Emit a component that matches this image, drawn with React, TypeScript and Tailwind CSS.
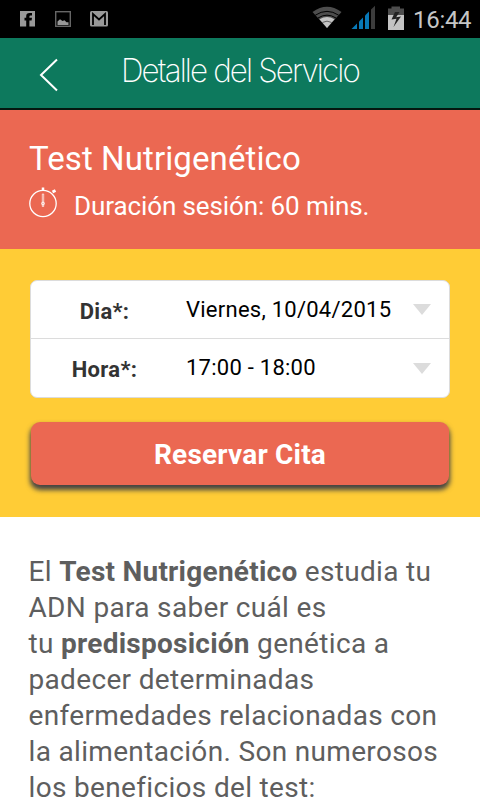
import React from "react";

type SelectRowProps = {
  label: string;
  value: string;
  className?: string;
};

function StatusBar() {
  return (
    <div className="flex h-[38px] items-center bg-black">
      <svg width="110" height="38" viewBox="0 0 110 38" className="shrink-0">
        {/* facebook */}
        <rect x="20" y="11" width="15" height="15.5" fill="#999" />
        <path d="M26.2 27V20.500H24.500V17.800H26.200V16.200Q26.200 13 29.500 13H32V15.600H30.500Q29.400 15.600 29.400 16.700V17.800H32L31.600 20.500H29.400V27Z" fill="#000" />
        {/* gallery */}
        <rect x="55.700" y="11.700" width="14.600" height="14.600" fill="none" stroke="#666" strokeWidth="1.400" />
        <path d="M57.500 25V21.500L60 19.300L62.500 21L64.500 20.300L66.500 22.300H68.500V25Z" fill="#999" />
        {/* gmail */}
        <rect x="90" y="11" width="18" height="15.500" rx="1.500" fill="#999" />
        <path d="M93 25V14L99 19.500L105 14V25" fill="none" stroke="#000" strokeWidth="1.800" />
      </svg>
      <svg width="92" height="38" viewBox="312 0 92 38" className="ml-[202px] shrink-0">
        {/* wifi */}
        <path d="M312.500 12Q327 1.500 341.500 12L327 28Z" fill="#4d4d4d" />
        <path d="M319.500 19.300Q327 14.500 334.500 19.300L327 28Z" fill="#c4c4c4" />
        <path d="M315.300 15.200Q327 7.500 338.700 15.200M318 18Q327 12.300 336 18" fill="none" stroke="#000" strokeWidth="1" />
        <path d="M322.300 22.500Q327 19.800 331.700 22.500" fill="none" stroke="#444" strokeWidth="0.800" />
        {/* signal */}
        <path d="M351.500 29L357 23.500V29Z" fill="#0879b8" />
        <path d="M359 29V21.500L363 17.500V29Z" fill="#0879b8" />
        <path d="M365 29V15.500L369 11.500V29Z" fill="#0879b8" />
        <path d="M371 29V9.500L375 5.800V29Z" fill="#3c3c3c" />
        {/* battery */}
        <path d="M388 8.500H391.500V6.500H400V8.500H404V16H388Z" fill="#4d4d4d" />
        <rect x="388" y="15" width="16" height="15" fill="#c4c4c4" />
        <path d="M395 12L391.500 19.500L396.500 18.700L393.500 27L401 16.500L396.200 17.300L399.500 12Z" fill="#222" />
      </svg>
      <span className="ml-[9px] pt-[2px] text-[24px] leading-[36px] tracking-[-0.3px] text-[#c6c6c6]">16:44</span>
    </div>
  );
}

function SelectRow({ label, value, className = "" }: SelectRowProps) {
  return (
    <div className={`flex items-center ${className}`}>
      <span className="w-[147px] pt-1 text-center text-[22px] leading-[26px] font-bold tracking-[0.3px] text-[#333]">{label}</span>
      <span className="ml-[8px] flex-1 whitespace-nowrap text-[22px] leading-[26px] tracking-[0.25px] text-black">{value}</span>
      <svg width="18" height="11" viewBox="0 0 18 11" className="mr-[18px]">
        <path d="M0 0H18L9 11Z" fill="#dcdcdc" />
      </svg>
    </div>
  );
}

export default function App() {
  return (
    <div className="h-[800px] w-[480px] overflow-hidden bg-white font-['Roboto',sans-serif]">
      <StatusBar />

      <header className="flex h-[72px] border-b-2 border-[#04170f] bg-[#0d795d]">
        <svg width="20" height="34" viewBox="0 0 20 34" className="mt-5 ml-[39px] shrink-0">
          <path d="M18 1.500L2 17L18 32.500" fill="none" stroke="#fff" strokeWidth="2" />
        </svg>
        <h1 className="mt-[11px] ml-[62px] origin-left scale-x-[0.95] whitespace-nowrap font-['Inter',sans-serif] text-[33px] leading-[42px] font-extralight tracking-[-1.95px] text-white">
          Detalle del Servicio
        </h1>
      </header>

      <section className="h-[139px] bg-[#eb6852] pt-[29px] pl-[29px] text-white">
        <h2 className="text-[33px] leading-[40px] tracking-[0.1px]">Test Nutrigenético</h2>
        <div className="mt-[7px] flex">
          <svg width="30" height="32" viewBox="0 0 30 32">
            <circle cx="14" cy="17.500" r="13.200" fill="none" stroke="#fff" strokeWidth="1.300" />
            <path d="M14 1.500V5" stroke="#fff" strokeWidth="2.500" />
            <path d="M23.500 6L26.500 4.500" stroke="#fff" strokeWidth="3" />
            <path d="M13.300 8H14.700V20.500H13.300Z" fill="#eb6852" stroke="#fff" strokeWidth="0.700" />
            <circle cx="14" cy="17.500" r="1.400" fill="none" stroke="#fff" strokeWidth="0.900" />
          </svg>
          <p className="mt-[4px] ml-[15px] text-[26px] leading-[32px] tracking-[-0.1px]">Duración sesión: 60 mins.</p>
        </div>
      </section>

      <section className="h-[268px] bg-[#ffcc36] px-[30px] pt-[31px]">
        <div className="h-[118px] rounded-[7px] border border-[#dcdcdc] bg-white">
          <SelectRow label="Dia*:" value="Viernes, 10/04/2015" className="h-[58px] border-b border-[#dcdcdc]" />
          <SelectRow label="Hora*:" value="17:00 - 18:00" className="h-[58px]" />
        </div>
        <button
          type="button"
          className="mt-[24px] ml-px block h-[63px] w-[418px] rounded-[9px] bg-[#eb6852] pt-[2px] text-[28px] font-bold tracking-[0.2px] text-white shadow-[0_4px_5px_1px_#444]"
        >
          Reservar Cita
        </button>
      </section>

      <p className="pt-[37px] pl-[28.5px] text-[28px] leading-[36px] tracking-[0.33px] whitespace-nowrap text-[#5e5e5e]">
        El <b className="tracking-[0.25px]">Test Nutrigenético</b> estudia tu
        <br />
        ADN para saber cuál es
        <br />
        tu <b className="tracking-[0.25px]">predisposición</b> genética a
        <br />
        padecer determinadas
        <br />
        enfermedades relacionadas con
        <br />
        la alimentación. Son numerosos
        <br />
        los beneficios del test:
      </p>
    </div>
  );
}
